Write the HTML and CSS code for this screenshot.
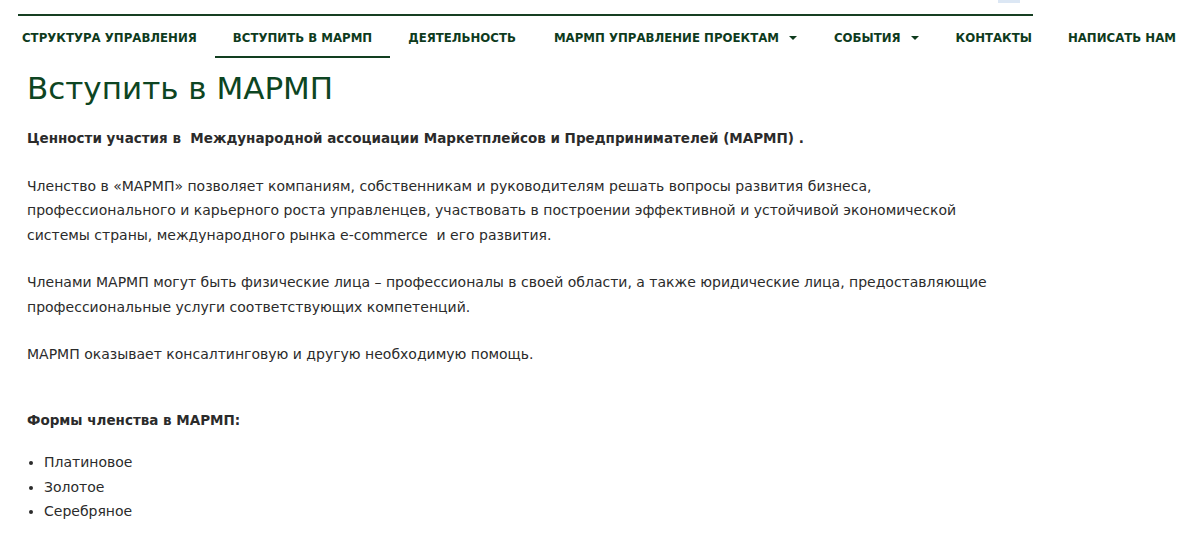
FILE: index.html
```html
<!DOCTYPE html>
<html lang="ru">
<head>
<meta charset="utf-8">
<title>Вступить в МАРМП</title>
<link rel="stylesheet" href="styles.css">
</head>
<body>
<header class="header">
  <div class="topbar">
    <div class="topbar-line"></div>
    <div class="topbar-tab"></div>
  </div>
  <nav class="nav">
    <a class="nav-item">СТРУКТУРА УПРАВЛЕНИЯ</a>
    <a class="nav-item active">ВСТУПИТЬ В МАРМП</a>
    <a class="nav-item">ДЕЯТЕЛЬНОСТЬ</a>
    <a class="nav-item has-sub">МАРМП УПРАВЛЕНИЕ ПРОЕКТАМ<span class="caret"></span></a>
    <a class="nav-item has-sub">СОБЫТИЯ<span class="caret"></span></a>
    <a class="nav-item">КОНТАКТЫ</a>
    <a class="nav-item">НАПИСАТЬ НАМ</a>
  </nav>
</header>
<main class="content">
  <h1 class="title">Вступить в МАРМП</h1>
  <p class="lead">Ценности участия в&nbsp; Международной ассоциации Маркетплейсов и Предпринимателей (МАРМП) .</p>
  <p>Членство в «МАРМП» позволяет компаниям, собственникам и руководителям решать вопросы развития бизнеса,<br>профессионального и карьерного роста управленцев, участвовать в построении эффективной и устойчивой экономической<br>системы страны, международного рынка e-commerce&nbsp; и его развития.</p>
  <p>Членами МАРМП могут быть физические лица – профессионалы в своей области, а также юридические лица, предоставляющие<br>профессиональные услуги соответствующих компетенций.</p>
  <p>МАРМП оказывает консалтинговую и другую необходимую помощь.</p>
  <p class="lead forms">Формы членства в МАРМП:</p>
  <ul class="list">
    <li>Платиновое</li>
    <li>Золотое</li>
    <li>Серебряное</li>
  </ul>
</main>
</body>
</html>
```
FILE: styles.css
```css
* { box-sizing: border-box; }
html, body { margin: 0; padding: 0; background: #fff; }
body {
  font-family: "DejaVu Sans", "Noto Sans", sans-serif;
  color: #2b2b2b;
  width: 1200px;
  overflow: hidden;
}
.topbar {
  display: flex;
  align-items: flex-end;
  height: 16px;
  padding-left: 18px;
  position: relative;
}
.topbar-line {
  width: 1015px;
  height: 2px;
  background: #163f22;
}
.topbar-tab {
  position: absolute;
  left: 998px;
  top: 0;
  width: 22px;
  height: 3px;
  background: #dce7f4;
}
.nav {
  display: flex;
  margin-left: 4px;
  padding-top: 3px;
  height: 42px;
}
.nav-item {
  display: flex;
  align-items: center;
  padding: 0 18px;
  font-size: 11.75px;
  font-weight: 700;
  color: #0e3b1d;
  white-space: nowrap;
  border-bottom: 2px solid transparent;
  height: 39px;
}
.nav-item:nth-child(3) { padding-right: 20px; }
.nav-item.has-sub { padding-right: 19px; }
.nav-item.active { border-bottom-color: #123f20; }
.caret {
  display: inline-block;
  margin-left: 10px;
  width: 0; height: 0;
  border-left: 4px solid transparent;
  border-right: 4px solid transparent;
  border-top: 4px solid #0e3b1d;
}
.content {
  padding-left: 27px;
}
.title {
  margin: 8px 0 0;
  font-size: 31px;
  font-weight: 400;
  color: #0d4522;
  line-height: 44px;
}
.content p {
  margin: 0 0 23px;
  font-size: 14px;
  line-height: 24.5px;
}
.content p.lead {
  font-weight: 700;
  font-size: 13.5px;
  margin-top: 16px;
}
.content p.forms { margin-top: 41px; margin-bottom: 18px; }
.list {
  margin: 0;
  padding-left: 17px;
  font-size: 14px;
  line-height: 24.5px;
}
```
